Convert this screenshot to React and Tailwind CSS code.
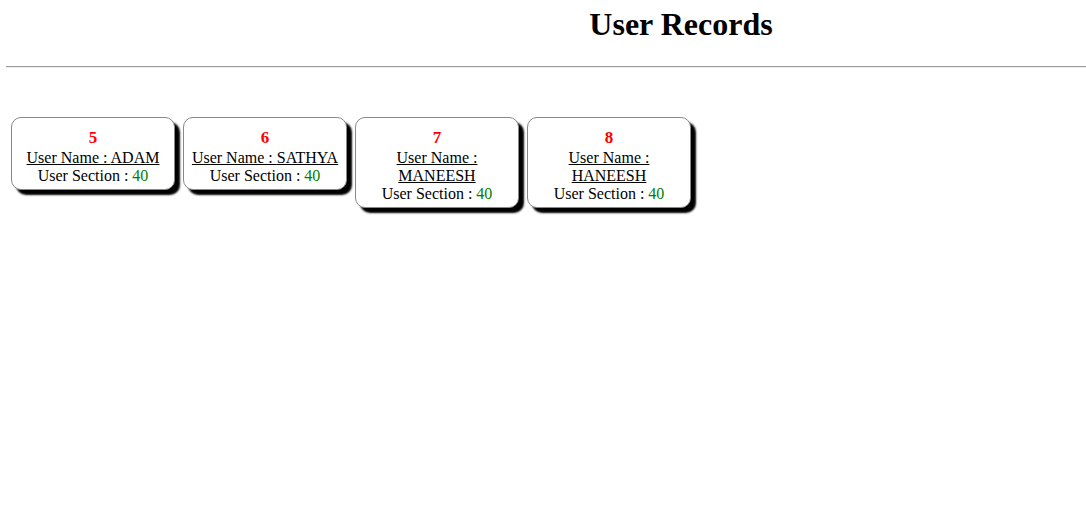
const users = [
  { id: 5, name: 'ADAM', section: 40 },
  { id: 6, name: 'SATHYA', section: 40 },
  { id: 7, name: 'MANEESH', section: 40 },
  { id: 8, name: 'HANEESH', section: 40 },
]

function UserCard({ user }) {
  return (
    <div className="w-[164px] rounded-[10px] border border-[#888] bg-white px-[6px] pt-[8px] pb-[4px] text-center shadow-[5px_5px_2px_#000]">
      <div className="text-[17px] leading-[23px] font-bold text-[#ff0000]">{user.id}</div>
      <div className="text-[16px] leading-[18px] underline">User Name : {user.name}</div>
      <div className="text-[16px] leading-[18px]">
        User Section : <span className="text-[#008000]">{user.section}</span>
      </div>
    </div>
  )
}

export default function App() {
  return (
    <div className="min-h-[506px] bg-white pt-[6px] text-black" style={{ fontFamily: '"Liberation Serif", "Times New Roman", serif' }}>
      <h1 className="pl-[276px] text-center text-[32px] leading-[37px] font-bold">User Records</h1>
      <hr className="mt-[23px] ml-[6px] border-0 border-t border-b border-t-[#9a9a9a] border-b-[#eeeeee]" />
      <div className="mt-[49px] ml-[11px] flex items-start gap-[8px]">
        {users.map((u) => (
          <UserCard key={u.id} user={u} />
        ))}
      </div>
    </div>
  )
}
